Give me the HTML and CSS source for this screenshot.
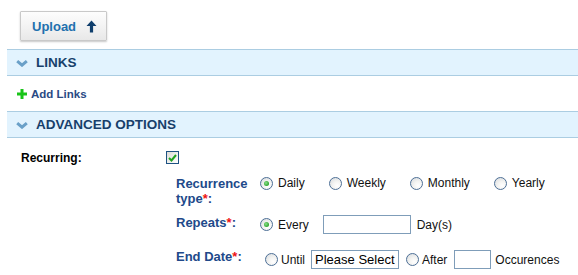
FILE: index.html
```html
<!DOCTYPE html>
<html lang="en">
<head>
  <meta charset="UTF-8">
  <meta name="viewport" content="width=device-width, initial-scale=1.0">
  <title>Upload options</title>
  <link rel="stylesheet" href="styles.css">
</head>
<body>
  <div class="page">
    <div class="toolbar">
      <button class="btn-upload" type="button">
        Upload
        <svg class="arrow-up" width="11" height="13" viewBox="0 0 11 13"><path d="M5.5 0.5 L10.5 6 L7.1 6 L7.1 12.5 L3.9 12.5 L3.9 6 L0.5 6 Z" fill="#0f3e6c"/></svg>
      </button>
    </div>

    <div class="panel-head">
      <svg class="chev" width="12" height="7" viewBox="0 0 12 7"><path d="M1.2 1.2 L6 5.2 L10.8 1.2" fill="none" stroke="#6aa0c8" stroke-width="3" stroke-linejoin="miter"/></svg>
      <span>LINKS</span>
    </div>
    <div class="links-body">
      <a class="add-link" href="#">
        <svg class="plus" width="10" height="10" viewBox="0 0 10 10"><path d="M3.5 0 H6.5 V3.5 H10 V6.5 H6.5 V10 H3.5 V6.5 H0 V3.5 H3.5 Z" fill="#19c419"/></svg>
        Add Links
      </a>
    </div>

    <div class="panel-head">
      <svg class="chev" width="12" height="7" viewBox="0 0 12 7"><path d="M1.2 1.2 L6 5.2 L10.8 1.2" fill="none" stroke="#6aa0c8" stroke-width="3" stroke-linejoin="miter"/></svg>
      <span>ADVANCED OPTIONS</span>
    </div>
    <div class="adv-body">
      <div class="recurring-row">
        <span class="plain-label">Recurring:</span>
        <span class="checkbox">
          <svg width="9" height="8" viewBox="0 0 9 8"><path d="M1 4 L3.5 6.5 L8 1" fill="none" stroke="#21a321" stroke-width="2"/></svg>
        </span>
      </div>

      <div class="recur">
        <div class="recur-row row-type">
          <div class="field-label label-2line">Recurrence<br>type<em>*</em>:</div>
          <div class="opts">
            <label class="opt"><span class="radio checked"></span>Daily</label>
            <label class="opt"><span class="radio"></span>Weekly</label>
            <label class="opt"><span class="radio"></span>Monthly</label>
            <label class="opt"><span class="radio"></span>Yearly</label>
          </div>
        </div>

        <div class="recur-row row-repeats">
          <div class="field-label">Repeats<em>*</em>:</div>
          <div class="ctrls">
            <span class="radio checked"></span>
            <span class="txt">Every</span>
            <input class="box box-days" type="text">
            <span class="txt txt-days">Day(s)</span>
          </div>
        </div>

        <div class="recur-row row-end">
          <div class="field-label">End Date<em>*</em>:</div>
          <div class="ctrls ctrls-end">
            <span class="radio"></span>
            <span class="txt txt-tight">Until</span>
            <input class="box box-date" type="text" value="Please Select" readonly>
            <span class="radio"></span>
            <span class="txt txt-tight">After</span>
            <input class="box box-count" type="text">
            <span class="txt txt-occ">Occurences</span>
          </div>
        </div>
      </div>
    </div>
  </div>
</body>
</html>
```

FILE: styles.css
```css
body {
  margin: 0;
  font-family: "Liberation Sans", Arial, sans-serif;
  font-size: 12px;
  color: #111;
  background: #fff;
  overflow: hidden;
}
.page {
  padding-left: 7px;
}
.toolbar {
  padding: 11px 0 8px 13px;
}
.btn-upload {
  display: flex;
  align-items: center;
  gap: 10px;
  height: 30px;
  width: 87px;
  padding: 0 0 0 11px;
  box-sizing: border-box;
  font-family: "Liberation Sans", Arial, sans-serif;
  font-size: 13px;
  font-weight: bold;
  color: #2270ae;
  border: 1px solid #c9c9c9;
  border-radius: 1px;
  background: linear-gradient(to bottom, #fdfdfd 0%, #f1f1f1 60%, #e8e8e8 100%);
  box-shadow: 0 1px 2px rgba(0, 0, 0, 0.22);
  cursor: pointer;
}
.arrow-up {
  margin-top: 1px;
}
.panel-head {
  display: flex;
  align-items: center;
  height: 25px;
  background: #e2f3fe;
  border-top: 1px solid #abcde2;
  border-bottom: 1px solid #abcde2;
  padding-left: 9px;
  font-size: 13.5px;
  font-weight: bold;
  color: #173f6b;
}
.chev {
  margin-right: 8px;
  margin-top: 1px;
}
.links-body {
  display: flex;
  align-items: center;
  height: 35px;
  padding: 1px 0 0 10px;
  box-sizing: border-box;
}
.add-link {
  display: flex;
  align-items: center;
  gap: 4px;
  font-size: 11.5px;
  font-weight: bold;
  color: #2a4a84;
  text-decoration: none;
}
.plus {
  margin-top: -1px;
}
.recurring-row {
  display: flex;
  align-items: center;
  padding: 13px 0 0 14px;
  height: 13px;
}
.plain-label {
  width: 145px;
  font-weight: bold;
  color: #000;
}
.checkbox {
  display: flex;
  align-items: center;
  justify-content: center;
  width: 11px;
  height: 11px;
  border: 1px solid #1d5283;
  background: linear-gradient(to bottom right, #dcdcd6, #fff);
}
.recur {
  margin: 12px 0 0 169px;
}
.recur-row {
  display: flex;
  align-items: flex-start;
}
.field-label {
  width: 84px;
  flex: none;
  font-size: 13px;
  font-weight: bold;
  line-height: 15px;
  color: #21498a;
}
.field-label em {
  font-style: normal;
  color: #ee1111;
}
.opts {
  display: flex;
  gap: 24px;
  line-height: 15px;
}
.opt {
  display: flex;
  align-items: center;
  gap: 5px;
}
.radio {
  display: inline-block;
  position: relative;
  flex: none;
  width: 11px;
  height: 11px;
  border: 1px solid #4d6f96;
  border-radius: 50%;
  background: radial-gradient(circle at 65% 70%, #ffffff 0%, #f4f4f2 40%, #d4d8dc 100%);
}
.radio.checked::after {
  content: "";
  position: absolute;
  left: 3px;
  top: 3px;
  width: 5px;
  height: 5px;
  border-radius: 50%;
  background: radial-gradient(circle at 40% 40%, #8be08b 0%, #2ea52e 70%);
}
.row-repeats {
  margin-top: 9px;
}
.ctrls {
  display: flex;
  align-items: center;
  height: 19px;
}
.txt {
  margin-left: 5px;
}
.box {
  height: 19px;
  box-sizing: border-box;
  border: 1px solid #7f9db9;
  padding: 0 3px;
  font-family: "Liberation Sans", Arial, sans-serif;
  font-size: 13px;
  color: #000;
  background: #fff;
  outline: none;
}
.box-days {
  width: 88px;
  margin-left: 14px;
}
.txt-days {
  margin-left: 6px;
}
.row-end {
  margin-top: 15px;
}
.ctrls-end {
  margin: 1px 0 0 5px;
}
.txt-tight {
  margin-left: 3px;
}
.box-date {
  width: 88px;
  margin: 0 7px 0 6px;
}
.box-count {
  width: 37px;
  margin-left: 7px;
}
.txt-occ {
  margin-left: 4px;
}
```
